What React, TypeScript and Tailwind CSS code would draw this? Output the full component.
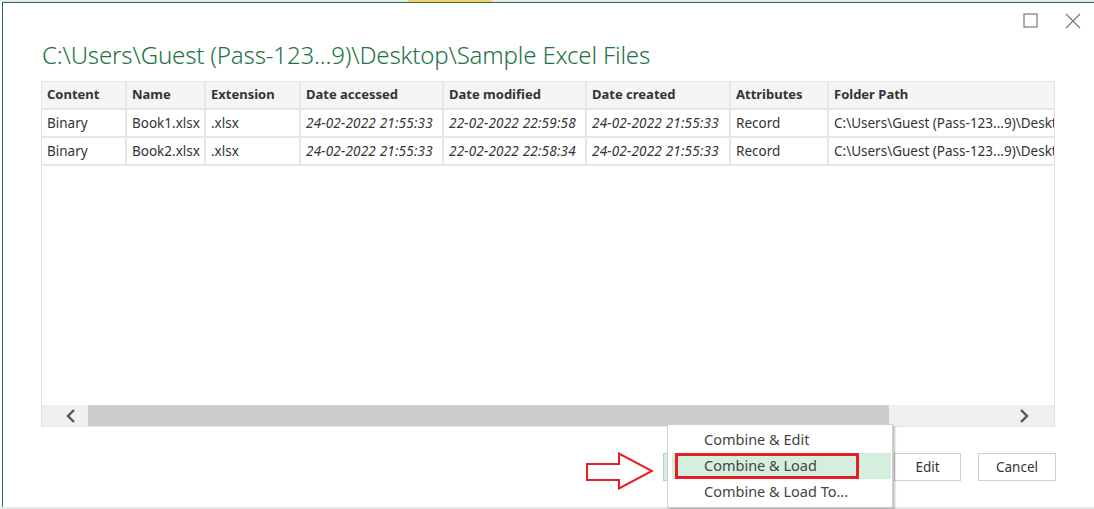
const columns = [
  { label: "Content", width: 85 },
  { label: "Name", width: 79 },
  { label: "Extension", width: 95 },
  { label: "Date accessed", width: 143 },
  { label: "Date modified", width: 143 },
  { label: "Date created", width: 144 },
  { label: "Attributes", width: 98 },
  { label: "Folder Path", width: 300 },
];

const rows = [
  ["Binary", "Book1.xlsx", ".xlsx", "24-02-2022 21:55:33", "22-02-2022 22:59:58", "24-02-2022 21:55:33", "Record", "C:\\Users\\Guest (Pass-123...9)\\Desktop\\Sample Excel Files\\"],
  ["Binary", "Book2.xlsx", ".xlsx", "24-02-2022 21:55:33", "22-02-2022 22:58:34", "24-02-2022 21:55:33", "Record", "C:\\Users\\Guest (Pass-123...9)\\Desktop\\Sample Excel Files\\"],
];

// dates are shown in italics
const italicCols = [3, 4, 5];

function FileTable() {
  return (
    <div className="ml-[38px] mt-[9px] flex h-[346px] w-[1014px] flex-col border border-[#e3e3e3] bg-white">
      <div className="flex-1 overflow-hidden">
        <div className="flex w-max flex-col">
          <div className="flex h-[28px] bg-[#f5f5f5]">
            {columns.map((c) => (
              <div
                key={c.label}
                style={{ width: c.width }}
                className="flex shrink-0 items-center border-r-2 border-b-2 border-[#e6e6e6] px-[5px] text-[13px] font-bold text-[#333]"
              >
                {c.label}
              </div>
            ))}
          </div>
          {rows.map((r, i) => (
            <div key={i} className="flex h-[28px]">
              {r.map((cell, j) => (
                <div
                  key={j}
                  style={{ width: columns[j].width }}
                  className={`flex shrink-0 items-center overflow-hidden whitespace-nowrap border-r-2 border-b-2 border-[#e6e6e6] px-[5px] text-[13.5px] text-[#333] ${
                    italicCols.includes(j) ? "italic tracking-[0.2px]" : ""
                  }`}
                >
                  {cell}
                </div>
              ))}
            </div>
          ))}
        </div>
      </div>
      {/* horizontal scrollbar */}
      <div className="flex h-[21px] items-center bg-[#f0f0f0]">
        <div className="flex w-[46px] items-center pl-[24px]">
          <svg width="10" height="14" viewBox="0 0 10 14">
            <path d="M8 1 L2 7 L8 13" fill="none" stroke="#555" strokeWidth="2.4" />
          </svg>
        </div>
        <div className="h-full w-[801px] bg-[#cdcdcd]" />
        <div className="flex flex-1 items-center justify-end pr-[25px]">
          <svg width="10" height="14" viewBox="0 0 10 14">
            <path d="M2 1 L8 7 L2 13" fill="none" stroke="#555" strokeWidth="2.4" />
          </svg>
        </div>
      </div>
    </div>
  );
}

export default function App() {
  return (
    <div className="relative h-[509px] w-[1094px] overflow-hidden bg-white font-['Noto_Sans',sans-serif]">
      {/* sliver of the excel sheet behind the dialog */}
      <div className="flex h-[2px] bg-[#e9e9e9]">
        <div className="w-[408px]" />
        <div className="w-[84px] bg-[#f7d26a]" />
      </div>

      <div className="ml-[2px] flex h-[505px] flex-col border-l border-t border-[#217346] bg-white">
        <div className="flex h-[35px] items-start justify-end gap-[27px] pr-[13px] pt-[10px]">
          <svg width="15" height="15" viewBox="0 0 15 15">
            <rect x="1" y="1" width="13" height="13" fill="none" stroke="#7a7a7a" strokeWidth="1.2" />
          </svg>
          <svg width="16" height="16" viewBox="0 0 16 16">
            <path d="M1 1 L15 15 M15 1 L1 15" stroke="#7a7a7a" strokeWidth="1.3" />
          </svg>
        </div>

        <h1 className="pl-[39px] text-[24px] leading-[34px] font-light tracking-[-0.15px] text-[#217346]">
          C:\Users\Guest (Pass-123...9)\Desktop\Sample Excel Files
        </h1>

        <FileTable />

        <div className="mt-[26px] flex justify-end gap-[17px] pr-[38px]">
          <button className="h-[28px] w-[67px] border border-[#cfcfcf] bg-white text-[13.5px] text-[#333]">
            Edit
          </button>
          <button className="h-[28px] w-[78px] border border-[#cfcfcf] bg-white text-[13.5px] text-[#333]">
            Cancel
          </button>
        </div>
      </div>
      <div className="h-[2px] bg-[#e6e6e6]" />

      {/* combine split button, mostly hidden by its menu */}
      <div className="absolute left-[663px] top-[453px] h-[28px] w-[220px] border border-[#a8d8ba] bg-[#d5efdf]" />

      {/* red callout arrow */}
      <svg className="absolute left-[586px] top-[452px]" width="68" height="38" viewBox="0 0 68 38">
        <path d="M1 12 H33 V1.5 L66 19 L33 36.5 V28 H1 Z" fill="white" stroke="#e81e25" strokeWidth="2" />
      </svg>

      {/* dropdown menu */}
      <div className="absolute left-[667px] top-[424px] w-[226px] border border-[#cfcfcf] bg-white pt-[2px] pb-[2px] shadow-[2px_2px_2px_rgba(0,0,0,0.25)]">
        <div className="flex h-[26px] items-center pl-[36px] text-[14.5px] text-[#444]">Combine &amp; Edit</div>
        <div className="relative mr-[1px] ml-[4px] flex h-[26px] items-center bg-[#d5efdf] pl-[32px] text-[14.5px] text-[#444]">
          Combine &amp; Load
          <div className="absolute left-[3px] top-0 h-[26px] w-[184px] border-[3px] border-[#e81e25]" />
        </div>
        <div className="flex h-[26px] items-center pl-[36px] text-[14.5px] text-[#444]">Combine &amp; Load To...</div>
      </div>
    </div>
  );
}
